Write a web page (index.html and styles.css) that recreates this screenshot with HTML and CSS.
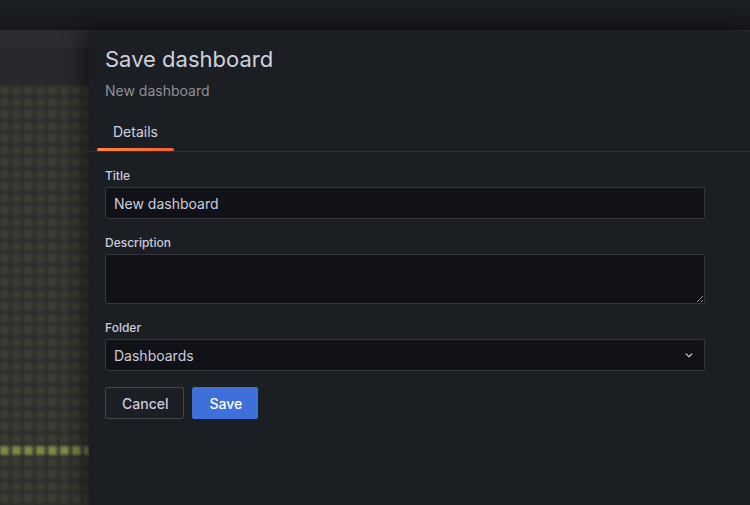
FILE: index.html
```html
<!DOCTYPE html>
<html>
<head>
	<meta charset="utf-8">
	<title>Save dashboard</title>
	<link rel="stylesheet" href="styles.css">
</head>
<body>
	<div class="topbar"></div>

	<div class="main">
		<div class="backdrop">
			<div class="panel-head"></div>
			<div class="heatmap">
				<div class="cells rows-top"></div>
				<div class="cells row-hot"></div>
				<div class="cells rows-bottom"></div>
			</div>
		</div>

		<div class="drawer">
			<div class="drawer-header">
				<h2>Save dashboard</h2>
				<div class="subtitle">New dashboard</div>
			</div>

			<div class="tabs">
				<div class="tab active">Details</div>
			</div>

			<div class="drawer-body">
				<form class="form">
					<div class="field">
						<label for="title">Title</label>
						<input type="text" id="title" value="New dashboard">
					</div>
					<div class="field">
						<label for="desc">Description</label>
						<textarea id="desc"></textarea>
					</div>
					<div class="field">
						<label>Folder</label>
						<div class="select">
							<span>Dashboards</span>
							<svg width="16" height="16" viewBox="0 0 24 24"><path d="M7 10l5 5 5-5" fill="none" stroke="#ccccdc" stroke-width="2" stroke-linecap="round" stroke-linejoin="round"/></svg>
						</div>
					</div>
					<div class="actions">
						<button type="button" class="btn secondary">Cancel</button>
						<button type="button" class="btn primary">Save</button>
					</div>
				</form>
			</div>
		</div>
	</div>
</body>
</html>
```

FILE: styles.css
```css
* {
	box-sizing: border-box;
}

body {
	margin: 0;
	height: 505px;
	overflow: hidden;
	background: #1b1d21;
	font-family: Inter, "Noto Sans", sans-serif;
	color: #ccccdc;
}

.topbar {
	height: 31px;
	background: linear-gradient(#1b1e22, #16181c);
	border-bottom: 1px solid #2a2c31;
}

.main {
	display: flex;
	height: 474px;
}

.backdrop {
	width: 89px;
	flex: none;
	background: #28292c;
	overflow: hidden;
}

.panel-head {
	height: 16px;
	background: #2c2d31;
	border-bottom: 1px solid #303236;
}

.heatmap {
	margin-top: 39px;
	filter: blur(1.4px);
}

.cells {
	background-color: #3b3d30;
	background-image:
		linear-gradient(to right, transparent 9px, #2b2c2e 9px),
		linear-gradient(to bottom, transparent 9px, #2b2c2e 9px);
	background-size: 12px 12px;
}

.rows-top {
	height: 360px;
}

.row-hot {
	height: 12px;
	background-color: #7e8b45;
}

.rows-bottom {
	height: 60px;
}

.drawer {
	flex: 1;
	background: #1b1e23;
	box-shadow: -8px 0 18px rgba(0, 0, 0, 0.45);
	position: relative;
}

.drawer-header {
	padding: 13px 16px 0;
}

.drawer-header h2 {
	margin: 0;
	font-size: 22px;
	font-weight: 400;
	line-height: 30px;
	color: #d0d0de;
}

.subtitle {
	font-size: 14px;
	line-height: 20px;
	margin-top: 7px;
	color: #8e8f9b;
}

.tabs {
	display: flex;
	padding-left: 8px;
	margin-top: 12px;
	border-bottom: 1px solid #2e3035;
}

.tab {
	position: relative;
	padding: 10px 16px 10px;
	font-size: 14px;
	line-height: 18px;
	color: #d0d0de;
}

.tab.active::after {
	content: "";
	position: absolute;
	left: 0;
	right: 0;
	bottom: 0;
	height: 3px;
	border-radius: 2px;
	background: linear-gradient(90deg, #ff8833, #f55f3e);
}

.drawer-body {
	padding: 16px;
}

.form {
	max-width: 600px;
}

.field {
	margin-bottom: 16px;
}

.field label {
	display: block;
	font-size: 12px;
	font-weight: 500;
	line-height: 15px;
	margin-bottom: 4px;
	color: #ccccdc;
}

input[type="text"], textarea, .select {
	display: block;
	width: 100%;
	background: #111217;
	border: 1px solid #34363c;
	border-radius: 2px;
	color: #ccccdc;
	font-family: inherit;
	font-size: 14px;
	padding: 0 8px;
}

input[type="text"] {
	height: 32px;
}

textarea {
	height: 50px;
	padding: 6px 8px;
	resize: vertical;
}

.select {
	height: 32px;
	display: flex;
	align-items: center;
	justify-content: space-between;
	padding-right: 8px;
}

.select svg {
	width: 14px;
	height: 14px;
}

.actions {
	display: flex;
	gap: 8px;
}

.btn {
	height: 32px;
	padding: 0 15px 0 16px;
	font-family: inherit;
	font-size: 14px;
	font-weight: 500;
	border-radius: 2px;
}

.btn.secondary {
	background: transparent;
	border: 1px solid #42454b;
	color: #ccccdc;
}

.btn.primary {
	background: #3d71d9;
	border: 1px solid #3d71d9;
	color: #ffffff;
}
```
